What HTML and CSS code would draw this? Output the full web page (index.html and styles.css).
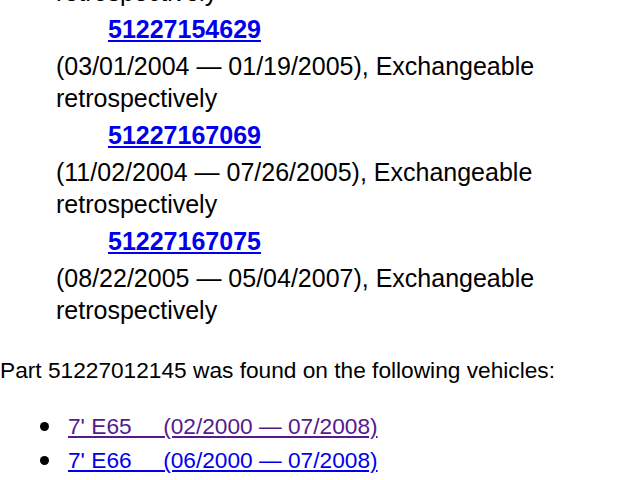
FILE: index.html
```html
<!DOCTYPE html>
<html>
<head>
<meta charset="utf-8">
<link rel="stylesheet" href="styles.css">
</head>
<body>
<div class="page">
  <div class="alternatives">
    <p class="alt-desc alt-tail">retrospectively</p>
    <div class="alt">
      <a class="alt-num" href="#">51227154629</a>
      <p class="alt-desc">(03/01/2004 — 01/19/2005), Exchangeable retrospectively</p>
    </div>
    <div class="alt">
      <a class="alt-num" href="#">51227167069</a>
      <p class="alt-desc">(11/02/2004 — 07/26/2005), Exchangeable retrospectively</p>
    </div>
    <div class="alt">
      <a class="alt-num" href="#">51227167075</a>
      <p class="alt-desc">(08/22/2005 — 05/04/2007), Exchangeable retrospectively</p>
    </div>
  </div>
  <p class="found">Part 51227012145 was found on the following vehicles:</p>
  <ul class="vehicles">
    <li class="vehicle"><a class="vehicle-link visited" href="#">7' E65&nbsp;&nbsp;&nbsp;&nbsp; (02/2000 — 07/2008)</a></li>
    <li class="vehicle"><a class="vehicle-link" href="#">7' E66&nbsp;&nbsp;&nbsp;&nbsp; (06/2000 — 07/2008)</a></li>
  </ul>
</div>
</body>
</html>
```
FILE: styles.css
```css
html, body {
  margin: 0;
  padding: 0;
  background: #fff;
}
body {
  font-family: "Liberation Sans", Arial, Helvetica, sans-serif;
  color: #000;
  overflow: hidden;
}
.page {
  margin-top: -24px;
}
.alternatives {
  padding-left: 56px;
  padding-right: 40px;
  font-size: 25px;
  line-height: 32px;
}
.alt-num {
  display: block;
  padding-left: 52px;
  font-weight: bold;
  line-height: 42px;
  color: #0000ee;
  text-decoration: underline;
}
.alt-num {
  width: max-content;
  margin-left: 52px;
  padding-left: 0;
}
.alt-desc {
  margin: 0;
}
.found {
  margin: 30px 0 0 0;
  font-size: 22.7px;
  line-height: 28px;
}
.vehicles {
  list-style: none;
  margin: 25px 0 0 0;
  padding: 0 0 0 40px;
  font-size: 22.7px;
  line-height: 34px;
}
.vehicle {
  display: flex;
  align-items: center;
}
.vehicle::before {
  content: "";
  width: 9px;
  height: 9px;
  border-radius: 50%;
  background: #000;
  margin-right: 19px;
  flex: none;
}
.vehicle-link {
  color: #0000ee;
  text-decoration: underline;
}
.vehicle-link.visited {
  color: #551a8b;
}
```
